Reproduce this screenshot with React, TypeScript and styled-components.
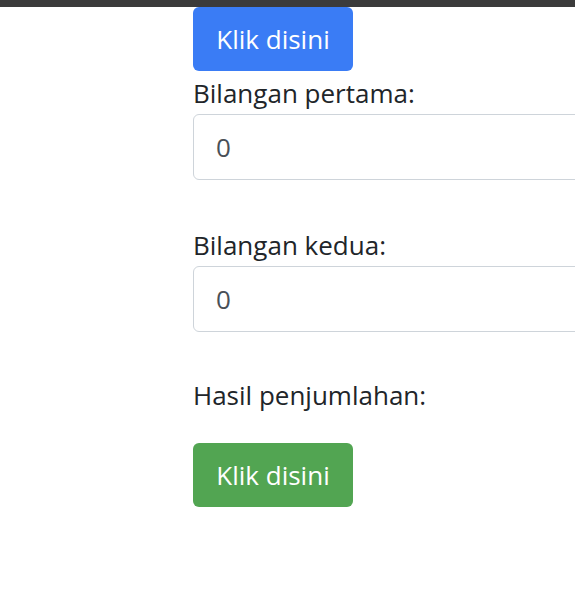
import React from "react";
import styled, { createGlobalStyle } from "styled-components";

const GlobalStyle = createGlobalStyle`
  html, body {
    margin: 0;
    padding: 0;
    background: #ffffff;
    overflow: hidden;
  }
  body {
    font-family: "Open Sans", "Noto Sans", "Liberation Sans", sans-serif;
    color: #212529;
  }
  * { box-sizing: border-box; }
`;

const TopBar = styled.div`
  height: 7px;
  background: #3b3b3b;
`;

const Container = styled.main`
  padding-left: 193px;
  display: flex;
  flex-direction: column;
  align-items: flex-start;
  overflow: hidden;
`;

const Button = styled.button<{ $variant: "primary" | "success" }>`
  width: 160px;
  height: 64px;
  border: none;
  border-radius: 6px;
  background: ${(p) => (p.$variant === "primary" ? "#3a7cf5" : "#52a552")};
  color: #ffffff;
  font-family: inherit;
  font-size: 26px;
  line-height: 39px;
  padding: 0;
  cursor: pointer;
`;

const Group = styled.div<{ $top: number }>`
  display: flex;
  flex-direction: column;
  margin-top: ${(p) => p.$top}px;
  width: 600px;
`;

const Label = styled.label`
  display: block;
  font-size: 26px;
  line-height: 39px;
  margin-bottom: 1px;
`;

const Input = styled.input`
  width: 100%;
  height: 66px;
  border: 1px solid #ced4da;
  border-radius: 6px;
  padding: 0 22px;
  font-family: inherit;
  font-size: 26px;
  color: #495057;
  background: #ffffff;
  outline: none;
`;

const Result = styled.p`
  margin: 44px 0 28px;
  font-size: 26px;
  line-height: 39px;
`;

export default function App() {
  return (
    <>
      <GlobalStyle />
      <TopBar />
      <Container>
        <Button $variant="primary">Klik disini</Button>
        <Group $top={3}>
          <Label>Bilangan pertama:</Label>
          <Input type="number" defaultValue="0" />
        </Group>
        <Group $top={46}>
          <Label>Bilangan kedua:</Label>
          <Input type="number" defaultValue="0" />
        </Group>
        <Result>Hasil penjumlahan:</Result>
        <Button $variant="success">Klik disini</Button>
      </Container>
    </>
  );
}
